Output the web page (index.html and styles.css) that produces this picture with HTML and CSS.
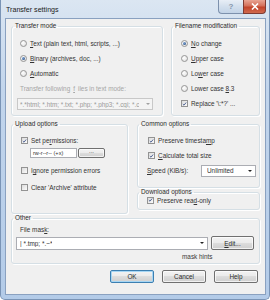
FILE: index.html
```html
<!DOCTYPE html>
<html lang="en">
<head>
    <meta charset="UTF-8">
    <title>Transfer settings</title>
    <link rel="stylesheet" href="styles.css">
</head>
<body>
    <div class="window">
        <div class="titlebar">
            <span class="title">Transfer settings</span>
            <div class="caption-btns">
                <span class="cap cap-help">?</span>
                <span class="cap cap-close">
                    <svg width="8" height="7" viewBox="0 0 8 7"><path d="M1 0.5 L7 6.5 M7 0.5 L1 6.5" stroke="#fff" stroke-width="1.6"/></svg>
                </span>
            </div>
        </div>
        <div class="client">
            <div class="row row-top">
                <fieldset class="group g-transfer">
                    <legend>Transfer mode</legend>
                    <div class="inner">
                        <div class="opt"><span class="radio"></span><span><u>T</u>ext (plain text, html, scripts, ...)</span></div>
                        <div class="opt"><span class="radio on"></span><span><u>B</u>inary (archives, doc, ...)</span></div>
                        <div class="opt"><span class="radio"></span><span><u>A</u>utomatic</span></div>
                        <div class="opt disabled">Transfer following <u>f</u>iles in text mode:</div>
                        <div class="combo combo-disabled">
                            <span class="combo-text">*.*html; *.htm; *.txt; *.php; *.php3; *.cgi; *.c</span>
                            <span class="arrow"></span>
                        </div>
                    </div>
                </fieldset>
                <fieldset class="group g-filename">
                    <legend>Filename modification</legend>
                    <div class="inner">
                        <div class="opt"><span class="radio on"></span><span><u>N</u>o change</span></div>
                        <div class="opt"><span class="radio"></span><span><u>U</u>pper case</span></div>
                        <div class="opt"><span class="radio"></span><span>Lo<u>w</u>er case</span></div>
                        <div class="opt"><span class="radio"></span><span>Lower case <u>8</u>.3</span></div>
                        <div class="opt"><span class="check on"><svg width="7" height="7" viewBox="0 0 7 7"><path d="M1.2 3.6 L2.8 5.2 L5.8 1.4" fill="none" stroke="#3b4f86" stroke-width="1.2"/></svg></span><span>Replace '\:*?' ...</span></div>
                    </div>
                </fieldset>
            </div>

            <div class="row row-mid">
                <fieldset class="group g-upload">
                    <legend>Upload options</legend>
                    <div class="inner">
                        <div class="opt"><span class="check on"><svg width="7" height="7" viewBox="0 0 7 7"><path d="M1.2 3.6 L2.8 5.2 L5.8 1.4" fill="none" stroke="#3b4f86" stroke-width="1.2"/></svg></span><span>Set pe<u>r</u>missions:</span></div>
                        <div class="perm-row">
                            <span class="edit perm-edit">rw-r--r-- (+x)</span>
                            <span class="btn btn-small">...</span>
                        </div>
                        <div class="opt opt-ignore"><span class="check"></span><span>I<u>g</u>nore permission errors</span></div>
                        <div class="opt opt-clear"><span class="check"></span><span>Clear 'Archive' attribute</span></div>
                    </div>
                </fieldset>
                <div class="col-right">
                    <fieldset class="group g-common">
                        <legend>Common options</legend>
                        <div class="inner">
                            <div class="opt"><span class="check on"><svg width="7" height="7" viewBox="0 0 7 7"><path d="M1.2 3.6 L2.8 5.2 L5.8 1.4" fill="none" stroke="#3b4f86" stroke-width="1.2"/></svg></span><span>Preserve timesta<u>m</u>p</span></div>
                            <div class="opt"><span class="check on"><svg width="7" height="7" viewBox="0 0 7 7"><path d="M1.2 3.6 L2.8 5.2 L5.8 1.4" fill="none" stroke="#3b4f86" stroke-width="1.2"/></svg></span><span><u>C</u>alculate total size</span></div>
                            <div class="opt speed-row">
                                <span class="speed-label"><u>S</u>peed (KiB/s):</span>
                                <div class="combo combo-speed">
                                    <span class="combo-text">Unlimited</span>
                                    <span class="arrow"></span>
                                </div>
                            </div>
                        </div>
                    </fieldset>
                    <fieldset class="group g-download">
                        <legend>Download options</legend>
                        <div class="inner">
                            <div class="opt opt-tight"><span class="check on"><svg width="7" height="7" viewBox="0 0 7 7"><path d="M1.2 3.6 L2.8 5.2 L5.8 1.4" fill="none" stroke="#3b4f86" stroke-width="1.2"/></svg></span><span>Preserve rea<u>d</u>-only</span></div>
                        </div>
                    </fieldset>
                </div>
            </div>

            <fieldset class="group g-other">
                <legend>Other</legend>
                <div class="inner">
                    <div class="mask-label">File mas<u>k</u>:</div>
                    <div class="mask-row">
                        <div class="combo combo-mask">
                            <span class="combo-text">| *.tmp; *.~*</span>
                            <span class="arrow"></span>
                        </div>
                        <span class="btn btn-edit"><u>E</u>dit...</span>
                    </div>
                    <div class="hints-row"><span class="hints">mask hints</span></div>
                </div>
            </fieldset>

            <div class="buttons">
                <span class="btn btn-default">OK</span>
                <span class="btn">Cancel</span>
                <span class="btn">Help</span>
            </div>
        </div>
    </div>
</body>
</html>
```

FILE: styles.css
```css
* {
    box-sizing: border-box;
}
body {
    margin: 0;
    width: 270px;
    height: 300px;
    overflow: hidden;
    font-family: "Liberation Sans", Arial, sans-serif;
    font-size: 6.4px;
    color: #333;
    background: #fff;
}
u {
    text-decoration: underline;
    text-underline-offset: 1px;
}
.window {
    width: 270px;
    height: 300px;
    background: linear-gradient(to bottom, #dbe6f2, #c2d5ec 30%, #b3cbe8);
    border: 1px solid #7a94b6;
    border-top: none;
    border-radius: 0 0 5px 5px;
    padding: 0 3px 4px 4px;
    display: flex;
    flex-direction: column;
}

/* title bar */
.titlebar {
    height: 18px;
    display: flex;
    justify-content: space-between;
    align-items: flex-start;
    flex-shrink: 0;
}
.title {
    font-size: 7.1px;
    color: #1a1a1a;
    padding: 6px 0 0 1px;
    line-height: 8px;
}
.caption-btns {
    display: flex;
}
.cap {
    height: 14px;
    display: flex;
    align-items: center;
    justify-content: center;
    border: 1px solid #7d91ad;
    border-top: none;
}
.cap-help {
    width: 25px;
    border-radius: 0 0 0 4px;
    background: linear-gradient(to bottom, #e8eef6, #d3dfed 50%, #c2d3e7);
    color: #8595ab;
    font-size: 8px;
    font-weight: bold;
    border-right: none;
}
.cap-close {
    width: 23px;
    border-radius: 0 0 4px 0;
    background: linear-gradient(to bottom, #e8a493, #d4705a 45%, #c2442b 55%, #d06a4e);
    border-color: #7e3b33;
}

/* client area */
.client {
    flex: 1;
    background: #f0f0f0;
    border: 1px solid #8aa1c0;
    padding: 3px 5px 0 5px;
    display: flex;
    flex-direction: column;
}
.row {
    display: flex;
}
.row-top {
    gap: 8px;
}
.row-mid {
    margin-top: 4px;
    gap: 9px;
}

/* group boxes */
fieldset.group {
    margin: 0;
    padding: 0;
    border: 1px solid #d5dfe5;
    border-radius: 3px;
    box-shadow: inset 1px 1px 0 #fff, 1px 1px 0 #fff;
    min-width: 0;
}
legend {
    padding: 0 2px;
    margin-left: 1px;
    line-height: 8px;
    height: 8px;
    color: #2a2a2a;
}
.g-transfer {
    width: 152px;
    height: 94px;
}
.g-transfer .inner {
    padding: 6px 0 0 8px;
}
.g-filename {
    flex: 1;
    height: 94px;
}
.g-filename .inner {
    padding: 6px 0 0 9px;
}
.g-upload {
    width: 117px;
    height: 94px;
}
.g-upload .inner {
    padding: 5px 0 0 9px;
}
.col-right {
    flex: 1;
    display: flex;
    flex-direction: column;
}
.g-common {
    height: 68px;
}
.g-common .inner {
    padding: 5px 0 0 10px;
}
.g-download {
    margin-top: 4px;
    height: 22px;
}
.g-download .inner {
    padding: 0 0 0 9px;
}
.g-other {
    margin-top: 4px;
    height: 50px;
}
.g-other .inner {
    padding: 4px 0 0 4px;
}

/* options */
.opt {
    display: flex;
    align-items: center;
    height: 15px;
    gap: 3px;
    white-space: nowrap;
}
.opt.disabled {
    color: #a6a6a6;
}
.opt-tight {
    height: 8px;
}
.opt-ignore {
    margin-top: 5px;
}
.opt-clear {
    margin-top: 2px;
}
.radio {
    width: 7px;
    height: 7px;
    border-radius: 50%;
    border: 1px solid #959595;
    background: radial-gradient(circle at 35% 35%, #fff, #dcdcdc);
    flex-shrink: 0;
    display: flex;
    align-items: center;
    justify-content: center;
}
.radio.on::after {
    content: "";
    width: 3px;
    height: 3px;
    border-radius: 50%;
    background: radial-gradient(circle at 35% 35%, #7fa7d8, #1d4177);
}
.check {
    width: 7px;
    height: 7px;
    border: 1px solid #939393;
    background: linear-gradient(to bottom right, #dcdcdc, #fbfbfb);
    flex-shrink: 0;
    display: flex;
    align-items: center;
    justify-content: center;
}
.check svg {
    width: 6px;
    height: 6px;
}

/* edits and combos */
.combo {
    display: flex;
    align-items: center;
    justify-content: space-between;
    background: #fff;
    border: 1px solid #abadb3;
    padding: 0 2px;
    white-space: nowrap;
    overflow: hidden;
}
.combo-text {
    overflow: hidden;
}
.arrow {
    width: 0;
    height: 0;
    border-left: 2px solid transparent;
    border-right: 2px solid transparent;
    border-top: 2px solid #222;
    flex-shrink: 0;
    margin-left: 2px;
}
.combo-disabled {
    margin: 2px 0 0 -3px;
    width: 136px;
    height: 12px;
    background: #f4f4f4;
    border-color: #c8c8c8;
    color: #9a9a9a;
}
.combo-disabled .arrow {
    border-top-color: #a0a0a0;
}
.perm-row {
    display: flex;
    height: 10px;
    margin-left: 9px;
    gap: 1px;
}
.edit {
    background: #fff;
    border: 1px solid #abadb3;
    display: flex;
    align-items: center;
    padding: 0 2px;
    font-size: 5.6px;
}
.perm-edit {
    width: 47px;
}
.speed-row {
    margin-left: -1px;
    gap: 0;
}
.speed-label {
    width: 54px;
}
.combo-speed {
    width: 55px;
    height: 12px;
    padding: 0 3px 0 5px;
}
.mask-label {
    height: 8px;
    line-height: 8px;
    padding-left: 4px;
}
.mask-row {
    margin-top: 2px;
    display: flex;
    align-items: center;
    gap: 3px;
}
.combo-mask {
    width: 192px;
    height: 13px;
    padding: 0 3px;
}
.hints-row {
    margin-top: 2px;
    height: 10px;
    line-height: 10px;
    padding-left: 166px;
}
.hints {
    color: #3a3a3a;
}

/* buttons */
.btn {
    display: flex;
    align-items: center;
    justify-content: center;
    border: 1px solid #707070;
    border-radius: 2px;
    background: linear-gradient(to bottom, #f2f2f2, #ebebeb 50%, #dddddd 50%, #cfcfcf);
    box-shadow: inset 0 0 0 1px rgba(255, 255, 255, 0.7);
    color: #2a2a2a;
}
.btn-small {
    width: 27px;
    height: 10px;
    font-size: 6px;
    line-height: 4px;
    align-items: flex-start;
}
.btn-edit {
    width: 43px;
    height: 14px;
}
.buttons {
    display: flex;
    justify-content: flex-end;
    gap: 8px;
    margin-top: 6px;
    padding-right: 2px;
}
.buttons .btn {
    width: 44px;
    height: 13px;
}
.btn-default {
    border-color: #3c7fb1;
    box-shadow: inset 0 0 0 1px #a6d6f4;
}
```
